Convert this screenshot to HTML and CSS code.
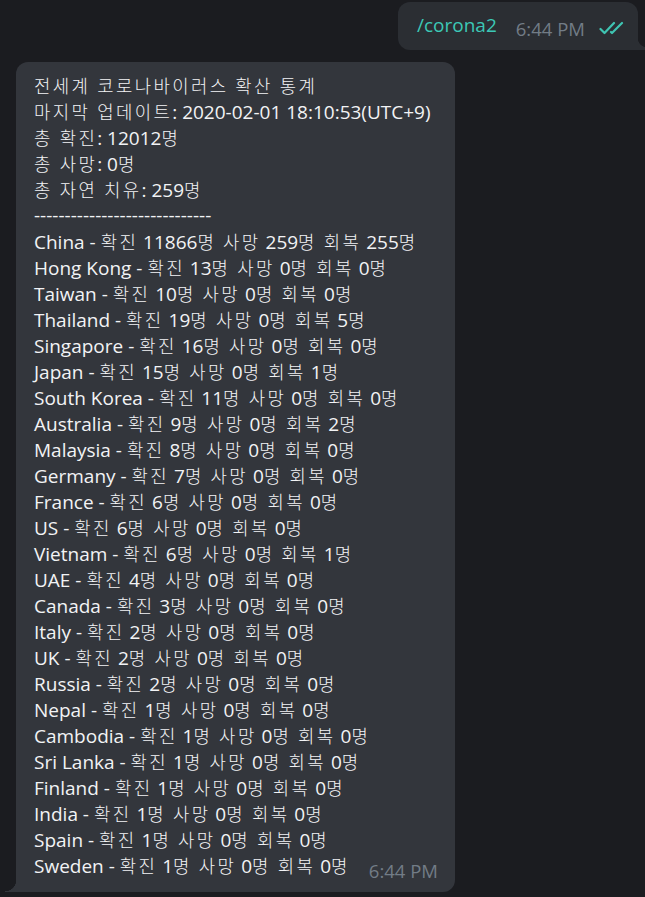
FILE: index.html
```html
<!DOCTYPE html>
<html lang="ko">
<head>
<meta charset="utf-8">
<link rel="stylesheet" href="styles.css">
</head>
<body>
<div class="chat">
  <div class="row out">
    <div class="bubble bubble-out">
      <span class="cmd">/corona2</span>
      <span class="meta">6:44 PM
        <svg class="checks" width="27" height="14" viewBox="0 0 27 14"><path d="M1.5 8 L5.5 12 L15 2 M12 11 L13 12 L23 2" fill="none" stroke="#3fc4b2" stroke-width="2.2" stroke-linecap="round" stroke-linejoin="round"/></svg>
      </span>
    </div>
  </div>
  <div class="row in">
    <div class="bubble bubble-in">
      <div class="line"><span class="k">전세계 코로나바이러스 확산 통계</span></div>
      <div class="line"><span class="k">마지막 업데이트</span>: 2020-02-01 18:10:53(UTC+9)</div>
      <div class="line"><span class="k">총 확진</span>: 12012<span class="k">명</span></div>
      <div class="line"><span class="k">총 사망</span>: 0<span class="k">명</span></div>
      <div class="line"><span class="k">총 자연 치유</span>: 259<span class="k">명</span></div>
      <div class="line">-----------------------------</div>
      <div class="line">China - <span class="k">확진</span> 11866<span class="k">명 사망</span> 259<span class="k">명 회복</span> 255<span class="k">명</span></div>
      <div class="line">Hong Kong - <span class="k">확진</span> 13<span class="k">명 사망</span> 0<span class="k">명 회복</span> 0<span class="k">명</span></div>
      <div class="line">Taiwan - <span class="k">확진</span> 10<span class="k">명 사망</span> 0<span class="k">명 회복</span> 0<span class="k">명</span></div>
      <div class="line">Thailand - <span class="k">확진</span> 19<span class="k">명 사망</span> 0<span class="k">명 회복</span> 5<span class="k">명</span></div>
      <div class="line">Singapore - <span class="k">확진</span> 16<span class="k">명 사망</span> 0<span class="k">명 회복</span> 0<span class="k">명</span></div>
      <div class="line">Japan - <span class="k">확진</span> 15<span class="k">명 사망</span> 0<span class="k">명 회복</span> 1<span class="k">명</span></div>
      <div class="line">South Korea - <span class="k">확진</span> 11<span class="k">명 사망</span> 0<span class="k">명 회복</span> 0<span class="k">명</span></div>
      <div class="line">Australia - <span class="k">확진</span> 9<span class="k">명 사망</span> 0<span class="k">명 회복</span> 2<span class="k">명</span></div>
      <div class="line">Malaysia - <span class="k">확진</span> 8<span class="k">명 사망</span> 0<span class="k">명 회복</span> 0<span class="k">명</span></div>
      <div class="line">Germany - <span class="k">확진</span> 7<span class="k">명 사망</span> 0<span class="k">명 회복</span> 0<span class="k">명</span></div>
      <div class="line">France - <span class="k">확진</span> 6<span class="k">명 사망</span> 0<span class="k">명 회복</span> 0<span class="k">명</span></div>
      <div class="line">US - <span class="k">확진</span> 6<span class="k">명 사망</span> 0<span class="k">명 회복</span> 0<span class="k">명</span></div>
      <div class="line">Vietnam - <span class="k">확진</span> 6<span class="k">명 사망</span> 0<span class="k">명 회복</span> 1<span class="k">명</span></div>
      <div class="line">UAE - <span class="k">확진</span> 4<span class="k">명 사망</span> 0<span class="k">명 회복</span> 0<span class="k">명</span></div>
      <div class="line">Canada - <span class="k">확진</span> 3<span class="k">명 사망</span> 0<span class="k">명 회복</span> 0<span class="k">명</span></div>
      <div class="line">Italy - <span class="k">확진</span> 2<span class="k">명 사망</span> 0<span class="k">명 회복</span> 0<span class="k">명</span></div>
      <div class="line">UK - <span class="k">확진</span> 2<span class="k">명 사망</span> 0<span class="k">명 회복</span> 0<span class="k">명</span></div>
      <div class="line">Russia - <span class="k">확진</span> 2<span class="k">명 사망</span> 0<span class="k">명 회복</span> 0<span class="k">명</span></div>
      <div class="line">Nepal - <span class="k">확진</span> 1<span class="k">명 사망</span> 0<span class="k">명 회복</span> 0<span class="k">명</span></div>
      <div class="line">Cambodia - <span class="k">확진</span> 1<span class="k">명 사망</span> 0<span class="k">명 회복</span> 0<span class="k">명</span></div>
      <div class="line">Sri Lanka - <span class="k">확진</span> 1<span class="k">명 사망</span> 0<span class="k">명 회복</span> 0<span class="k">명</span></div>
      <div class="line">Finland - <span class="k">확진</span> 1<span class="k">명 사망</span> 0<span class="k">명 회복</span> 0<span class="k">명</span></div>
      <div class="line">India - <span class="k">확진</span> 1<span class="k">명 사망</span> 0<span class="k">명 회복</span> 0<span class="k">명</span></div>
      <div class="line">Spain - <span class="k">확진</span> 1<span class="k">명 사망</span> 0<span class="k">명 회복</span> 0<span class="k">명</span></div>
      <div class="line last"><span>Sweden - <span class="k">확진</span> 1<span class="k">명 사망</span> 0<span class="k">명 회복</span> 0<span class="k">명</span></span><span class="meta time-in">6:44 PM</span></div>
    </div>
  </div>
</div>
</body>
</html>
```
FILE: styles.css
```css
html, body {
  margin: 0;
  padding: 0;
  background: #1b1c20;
  height: 100%;
  overflow: hidden;
}
.chat {
  font-family: "Open Sans", "Noto Sans CJK KR", sans-serif;
  font-size: 19px;
  color: #f2f3f5;
}
.k {
  font-family: "Noto Sans CJK KR", sans-serif;
  font-size: 17.8px;
  font-weight: 300;
  letter-spacing: 2.4px;
  word-spacing: -0.5px;
}
.row {
  display: flex;
}
.row.out {
  justify-content: flex-end;
  padding-top: 2px;
  padding-right: 7px;
}
.row.in {
  padding-top: 12px;
  padding-left: 16px;
}
.bubble {
  position: relative;
}
.bubble-out {
  background: #2b2e33;
  border-radius: 12px 12px 0 12px;
  height: 48px;
  width: 240px;
  box-sizing: border-box;
  padding: 0 0 0 19px;
  display: flex;
  align-items: center;
  gap: 19px;
}
.bubble-out::after {
  content: "";
  position: absolute;
  right: -9px;
  bottom: 0;
  width: 9px;
  height: 12px;
  background: radial-gradient(circle at 100% 0, transparent 9px, #2b2e33 9.5px);
}
.cmd {
  color: #3cc8b6;
  line-height: 26px;
  margin-top: -3px;
}
.meta {
  color: #727c86;
  font-size: 18.5px;
  display: flex;
  align-items: center;
  gap: 14px;
  margin-top: 5px;
}
.checks {
  margin-top: -2px;
}
.bubble-in {
  background: #33363c;
  border-radius: 12px 12px 12px 0;
  width: 439px;
  box-sizing: border-box;
  padding: 10px 17px 8px 18px;
}
.bubble-in::before {
  content: "";
  position: absolute;
  left: -11px;
  bottom: 0;
  width: 11px;
  height: 12px;
  background: radial-gradient(circle at 0 0, transparent 11px, #33363c 11.5px);
}
.line {
  line-height: 26px;
  height: 26px;
  white-space: nowrap;
}
.line.last {
  display: flex;
  justify-content: space-between;
  height: auto;
}
.time-in {
  margin-top: 6px;
  line-height: 26px;
}
```
